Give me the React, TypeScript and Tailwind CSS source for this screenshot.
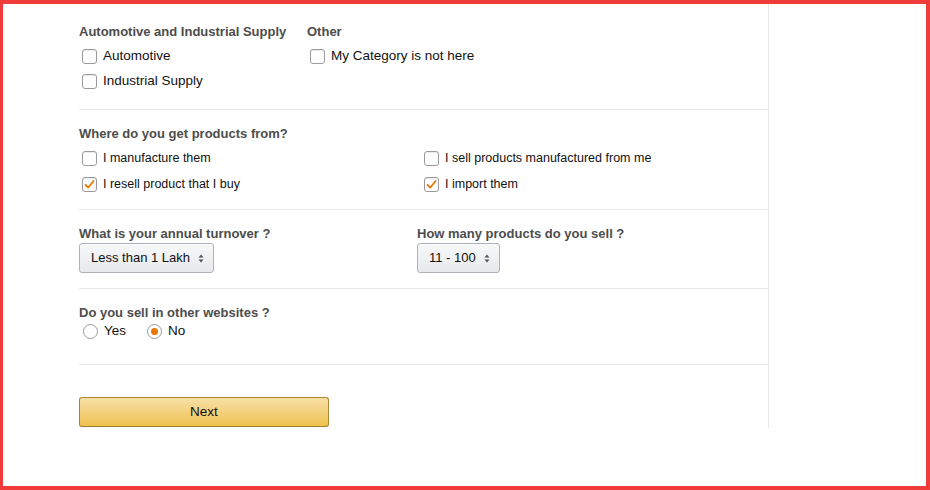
import React from "react";

const Check = ({ checked }: { checked?: boolean }) => (
  <span className="relative flex h-[15px] w-[15px] shrink-0 items-center justify-center rounded-[3px] border border-[#9a9a9a] bg-white shadow-[inset_0_1px_0_rgba(0,0,0,0.08)]">
    {checked && (
      <svg width="11" height="11" viewBox="0 0 11 11" fill="none">
        <path d="M1.5 5.8 L4.3 8.5 L9.6 2" stroke="#e77600" strokeWidth="1.8" strokeLinecap="round" strokeLinejoin="round" />
      </svg>
    )}
  </span>
);

const Radio = ({ checked }: { checked?: boolean }) => (
  <span className="flex h-[15px] w-[15px] shrink-0 items-center justify-center rounded-full border border-[#9a9a9a] bg-white">
    {checked && <span className="h-[7px] w-[7px] rounded-full bg-[#e77600]" />}
  </span>
);

const Heading = ({ children }: { children: React.ReactNode }) => (
  <div className="h-4 text-[13px] font-bold leading-[18px] text-[#4d4d4d]">{children}</div>
);

const Select = ({ label }: { label: string }) => (
  <button className="flex h-[30px] items-center gap-2 rounded-[3px] border border-[#adb1b8] bg-gradient-to-b from-[#f7f8fa] to-[#e7e9ec] pl-[11px] pr-[9px] text-[13px] text-[#111] shadow-[0_1px_0_rgba(255,255,255,0.6)_inset]">
    <span>{label}</span>
    <svg width="6" height="9" viewBox="0 0 6 9">
      <path d="M3 0.5 L5.5 3.5 H0.5 Z M3 8.5 L5.5 5.5 H0.5 Z" fill="#555" />
    </svg>
  </button>
);

export default function App() {
  return (
    <div
      className="h-[490px] w-[930px] border-y-4 border-r-4 border-l-[3px] border-[#f03b3b] bg-white text-[#111]"
      style={{ fontFamily: '"Liberation Sans", Arial, sans-serif' }}
    >
      <div className="ml-[76px] flex w-[690px] flex-col border-r border-[#e7e7e7]">
        <section className="border-b border-[#e7e7e7] pt-[19px] pb-4">
          <div className="grid grid-cols-[228px_1fr]">
            <div>
              <Heading>Automotive and Industrial Supply</Heading>
              <div className="mt-1 text-[13.5px]">
                <label className="flex h-[25px] items-center gap-[6px] pl-[3px] pt-px">
                  <Check />
                  Automotive
                </label>
                <label className="flex h-[25px] items-center gap-[6px] pl-[3px] pt-px">
                  <Check />
                  Industrial Supply
                </label>
              </div>
            </div>
            <div>
              <Heading>Other</Heading>
              <div className="mt-1 text-[13.5px]">
                <label className="flex h-[25px] items-center gap-[6px] pl-[3px] pt-px">
                  <Check />
                  My Category is not here
                </label>
              </div>
            </div>
          </div>
        </section>

        <section className="border-b border-[#e7e7e7] pt-[15px] pb-3">
          <Heading>Where do you get products from?</Heading>
          <div className="mt-1 grid grid-cols-[342px_1fr] text-[12.5px]">
            <label className="flex h-[26px] items-center gap-[6px] pl-[3px] pt-px">
              <Check />
              I manufacture them
            </label>
            <label className="flex h-[26px] items-center gap-[6px] pl-[3px] pt-px">
              <Check />
              I sell products manufactured from me
            </label>
            <label className="flex h-[26px] items-center gap-[6px] pl-[3px] pt-px">
              <Check checked />
              I resell product that I buy
            </label>
            <label className="flex h-[26px] items-center gap-[6px] pl-[3px] pt-px">
              <Check checked />
              I import them
            </label>
          </div>
        </section>

        <section className="grid grid-cols-[338px_1fr] border-b border-[#e7e7e7] pt-[15px] pb-[15px]">
          <div>
            <Heading>What is your annual turnover ?</Heading>
            <div className="mt-0.5 flex">
              <Select label="Less than 1 Lakh" />
            </div>
          </div>
          <div>
            <Heading>How many products do you sell ?</Heading>
            <div className="mt-0.5 flex">
              <Select label="11 - 100" />
            </div>
          </div>
        </section>

        <section className="border-b border-[#e7e7e7] pt-[15px] pb-[22px]">
          <Heading>Do you sell in other websites ?</Heading>
          <div className="flex h-[22px] items-center pt-px text-[13.5px]">
            <label className="flex items-center gap-[6px] pl-[4px]">
              <Radio />
              Yes
            </label>
            <label className="ml-[21px] flex items-center gap-[6px]">
              <Radio checked />
              No
            </label>
          </div>
        </section>

        <section className="pt-8 pb-px">
          <button className="flex h-[30px] w-[250px] items-center justify-center rounded-[3px] border border-[#a88734] border-b-[#9c7e31] bg-gradient-to-b from-[#f7dfa5] to-[#f0c14b] text-[13.5px] text-[#111]">
            Next
          </button>
        </section>
      </div>
    </div>
  );
}
